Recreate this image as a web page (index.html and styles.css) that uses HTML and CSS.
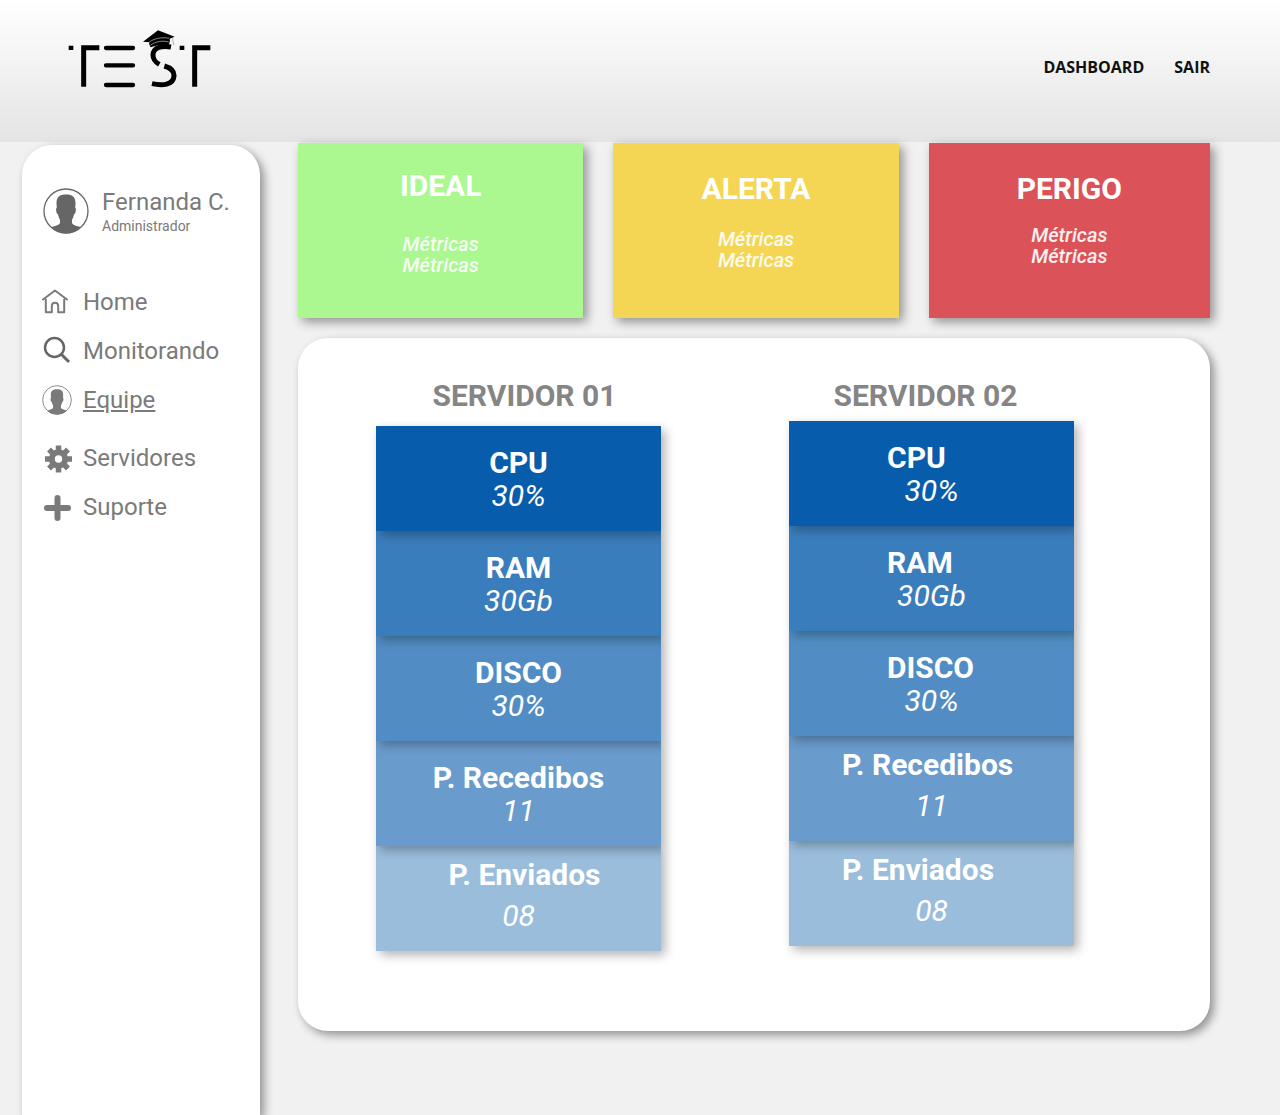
FILE: index.html
```html
<!DOCTYPE html>
<html lang="pt-BR">
<head>
<meta charset="utf-8">
<meta name="viewport" content="width=device-width, initial-scale=1">
<title>Dashboard</title>
<link rel="stylesheet" href="styles.css">
</head>
<body>
<svg class="defs" aria-hidden="true">
  <symbol id="icon-user" viewBox="0 0 46 46">
    <circle cx="23" cy="23" r="22" fill="#fff" stroke="currentColor" stroke-width="1.3"/>
    <path fill="currentColor" d="M23 6.500C16.500 6.500 13.500 9 13.500 15L13.800 20C12.900 20 13 22 13.400 24C13.600 25.200 14.200 26 15 26.200C15.400 28.500 16 30 17 31.500V35C16 37.500 12 37.600 8 39.500A22 22 0 0 0 38 39.500C34 37.600 30 37.500 29 35V31.500C30 30 30.600 28.500 31 26.200C31.800 26 32.400 25.200 32.600 24C33 22 33.100 20 32.200 20L32.500 15C32.500 9 29.500 6.500 23 6.500Z"/>
  </symbol>
</svg>

<header class="topbar">
  <a class="logo" href="#" aria-label="TEST">
    <svg viewBox="50 40 435 180" fill="none" stroke="#000" aria-hidden="true">
      <path fill="#000" stroke="none" d="M55 93h14v13H55zM388 93h14v13h-14z"/>
      <path stroke-width="15" d="M147 99H100V216M480 99H433V216"/>
      <path stroke-width="13" stroke-linecap="round" d="M167 100H248M167 152H248M167 211H248"/>
      <path stroke-width="15" d="M362 97C335 92 308 98 308 121C308 136 315 142 327 149M342 154C362 160 372 168 371 184C369 211 336 214 305 207"/>
      <path fill="#000" stroke="none" d="M278 81L323 47L373 66L358 72C360 79 357 85 355 91C336 89 318 92 301 98C297 92 296 88 297 83Z"/>
      <path stroke="#ccc" stroke-width="2" d="M297 82C314 70 337 67 356 71M300 92C316 80 336 77 355 82"/>
      <path stroke="#888" stroke-width="2" d="M366 69L368 81L371 91"/>
    </svg>
  </a>
  <nav class="topnav" aria-label="Principal">
    <a href="#">DASHBOARD</a>
    <a href="#">SAIR</a>
  </nav>
</header>

<div class="layout">
  <aside class="sidebar">
    <div class="profile">
      <svg class="avatar"><use href="#icon-user"/></svg>
      <div>
        <p class="profile-name">Fernanda C.</p>
        <p class="profile-role">Administrador</p>
      </div>
    </div>
    <nav aria-label="Menu">
      <ul class="menu">
        <li><a href="#">
          <svg class="icon" viewBox="0 0 30 30" fill="none" stroke="currentColor" stroke-width="2" stroke-linejoin="round" stroke-linecap="round"><path d="M1 12.500L13 3.500L25 12.500M3.800 12.500V25.200H9.800V19C9.800 14.500 16.200 14.500 16.200 19V25.200H22.200V12.500"/></svg>
          <span>Home</span></a></li>
        <li><a href="#">
          <svg class="icon" viewBox="0 0 30 30" fill="none" stroke="#666" stroke-width="2.500"><circle cx="12.500" cy="11.500" r="9.500"/><path stroke-width="3" d="M19 18L27 26"/></svg>
          <span>Monitorando</span></a></li>
        <li><a class="current" href="#" aria-current="page">
          <svg class="icon"><use href="#icon-user"/></svg>
          <span>Equipe</span></a></li>
        <li class="menu-group"><a href="#">
          <svg class="icon" viewBox="0 0 30 30" fill="none" stroke="currentColor"><circle cx="16.500" cy="16" r="6.700" stroke-width="6"/><path stroke-width="5.500" d="M16.500 2.500V8M16.500 24V29.500M3 16H8.500M24.500 16H30M7 6.500L10.900 10.400M22.100 21.600L26 25.500M26 6.500L22.100 10.400M10.900 21.600L7 25.500"/></svg>
          <span>Servidores</span></a></li>
        <li><a href="#">
          <svg class="icon" viewBox="0 0 30 30" fill="none" stroke="currentColor" stroke-width="6" stroke-linecap="round"><path d="M15.500 6V26M5 16H26"/></svg>
          <span>Suporte</span></a></li>
      </ul>
    </nav>
  </aside>

  <main class="content">
    <section class="status-cards" aria-label="Status">
      <article class="status ideal">
        <h2>IDEAL</h2>
        <p>Métricas<br>Métricas</p>
      </article>
      <article class="status alerta">
        <h2>ALERTA</h2>
        <p>Métricas<br>Métricas</p>
      </article>
      <article class="status perigo">
        <h2>PERIGO</h2>
        <p>Métricas<br>Métricas</p>
      </article>
    </section>

    <section class="panel" aria-label="Servidores">
      <article class="server server-a">
        <h2>SERVIDOR 01</h2>
        <dl class="metrics">
          <div><dt>CPU</dt><dd>30%</dd></div>
          <div><dt>RAM</dt><dd>30Gb</dd></div>
          <div><dt>DISCO</dt><dd>30%</dd></div>
          <div><dt>P. Recedibos</dt><dd>11</dd></div>
          <div class="spread"><dt>P. Enviados</dt><dd>08</dd></div>
        </dl>
      </article>
      <article class="server server-b">
        <h2>SERVIDOR 02</h2>
        <dl class="metrics">
          <div><dt>CPU</dt><dd>30%</dd></div>
          <div><dt>RAM</dt><dd>30Gb</dd></div>
          <div><dt>DISCO</dt><dd>30%</dd></div>
          <div class="spread"><dt>P. Recedibos</dt><dd>11</dd></div>
          <div class="spread"><dt>P. Enviados</dt><dd>08</dd></div>
        </dl>
      </article>
    </section>
  </main>
</div>
</body>
</html>
```

FILE: styles.css
```css
:root {
  --shadow: 4px 4px 10px rgba(0, 0, 0, 0.4);
  --grey: #7a7a7a;
}

* { box-sizing: border-box; }

body {
  margin: 0;
  min-height: 100vh;
  display: flex;
  flex-direction: column;
  background: #f1f1f1;
  font-family: Roboto, "Liberation Sans", sans-serif;
  color: var(--grey);
}

h2, p, ul, dl, dd { margin: 0; padding: 0; }
a { color: inherit; text-decoration: none; }
svg { display: block; flex: none; }
.defs { position: absolute; width: 0; height: 0; }

/* Header */
.topbar {
  display: flex;
  align-items: center;
  justify-content: space-between;
  padding: 28px 70px 54px 67px;
  background: linear-gradient(#fff, #e4e4e4);
}
.logo svg { width: 145px; height: 60px; }
.topnav {
  display: flex;
  gap: 30px;
  padding-top: 18px;
  font: 700 16px/20px "Open Sans", "Noto Sans", sans-serif;
  color: #111;
}

.layout {
  flex: 1;
  display: flex;
  gap: 38px;
  padding: 0 70px 0 22px;
}

/* Sidebar */
.sidebar {
  flex: none;
  width: 238px;
  margin-top: 3px;
  padding: 42px 0 40px 20px;
  border-radius: 30px 30px 0 0;
  background: #fff;
  box-shadow: var(--shadow);
}
.profile { display: flex; align-items: center; gap: 12px; margin-bottom: 52px; }
.avatar { width: 48px; height: 46px; color: #666; }
.profile-name { font-size: 24px; line-height: 30px; }
.profile-role { font-size: 14px; line-height: 18px; }
.menu { list-style: none; display: flex; flex-direction: column; gap: 19px; }
.menu a { display: flex; align-items: center; gap: 11px; font-size: 24px; line-height: 30px; }
.menu .current span { text-decoration: underline; }
.menu-group { margin-top: 9px; }
.icon { width: 30px; height: 30px; }

/* Status cards */
.content { flex: 1; min-width: 0; }
.status-cards {
  display: grid;
  grid-template-columns: 285fr 285fr 281fr;
  gap: 30px;
  padding-top: 1px;
}
.status {
  min-height: 175px;
  padding-top: 30px;
  text-align: center;
  color: #fff;
  box-shadow: var(--shadow);
}
.status h2 { font-size: 30px; line-height: 32px; }
.status p { font-size: 20px; font-style: italic; font-weight: 500; line-height: 21px; opacity: 0.9; }
.ideal { background: #abf890; padding-top: 27px; }
.alerta { background: #f4d654; }
.perigo { background: #db5359; }
.ideal p { margin-top: 32px; }
.alerta p { margin-top: 24px; }
.perigo p { margin-top: 20px; }

/* Server panel */
.panel {
  display: grid;
  grid-template-columns: 285fr 285fr;
  gap: 128px;
  margin-top: 20px;
  padding: 40px 136px 80px 78px;
  border-radius: 30px;
  background: #fff;
  box-shadow: var(--shadow);
}
.server h2 { font-size: 30px; line-height: 36px; text-align: center; color: #858585; }
.server-a h2 { padding-left: 12px; }
.server-b h2 { padding-right: 12px; }
.metrics { margin-top: 12px; }
.server-b .metrics { margin-top: 7px; }
.metrics div {
  position: relative;
  min-height: 105px;
  padding-top: 20px;
  text-align: center;
  color: #fff;
  box-shadow: 4px 4px 10px rgba(0, 0, 0, 0.3);
}
.metrics dt, .metrics dd { font-size: 30px; line-height: 33px; }
.metrics dt { font-weight: 700; }
.metrics dd { font-style: italic; }
.metrics .spread { padding-top: 12px; }
.metrics .spread dd { margin-top: 8px; }

/* Each row casts its shadow on the row below it */
.metrics div:nth-child(1) { background: #075cac; z-index: 5; }
.metrics div:nth-child(2) { background: #3a7dbd; z-index: 4; }
.metrics div:nth-child(3) { background: #518dc4; z-index: 3; }
.metrics div:nth-child(4) { background: #6a9bcd; z-index: 2; }
.metrics div:nth-child(5) { background: #9abddc; z-index: 1; }

.server-a .spread dt { padding-left: 12px; }
.server-b dt { padding-left: 98px; text-align: left; }
.server-b .spread dt { padding-left: 53px; }
```
